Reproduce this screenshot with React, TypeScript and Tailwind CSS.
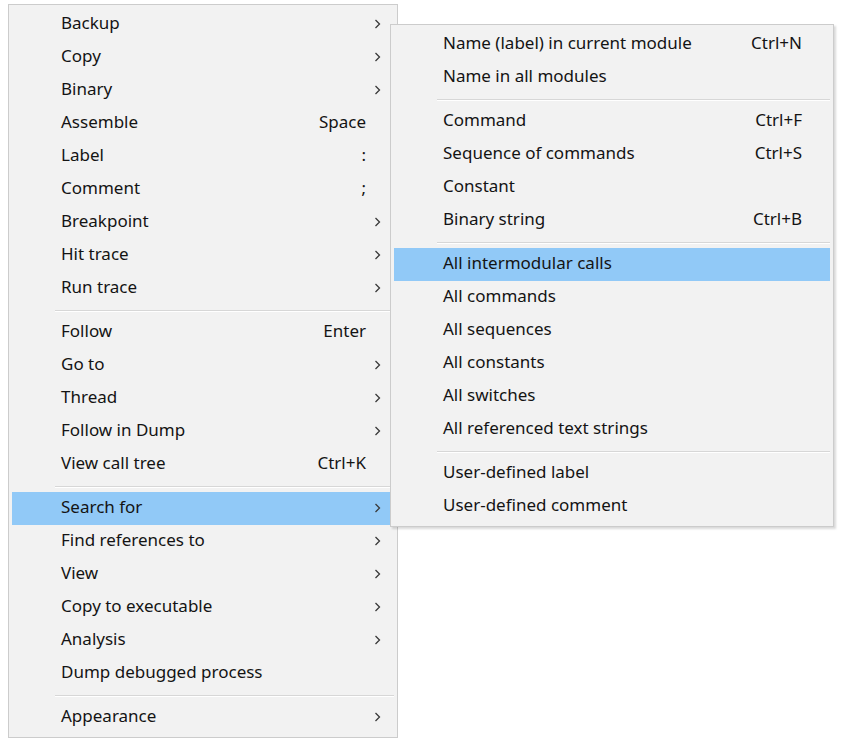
type Item = { label: string; shortcut?: string; sub?: boolean; active?: boolean } | 'sep';

const mainItems: Item[] = [
  { label: 'Backup', sub: true },
  { label: 'Copy', sub: true },
  { label: 'Binary', sub: true },
  { label: 'Assemble', shortcut: 'Space' },
  { label: 'Label', shortcut: ':' },
  { label: 'Comment', shortcut: ';' },
  { label: 'Breakpoint', sub: true },
  { label: 'Hit trace', sub: true },
  { label: 'Run trace', sub: true },
  'sep',
  { label: 'Follow', shortcut: 'Enter' },
  { label: 'Go to', sub: true },
  { label: 'Thread', sub: true },
  { label: 'Follow in Dump', sub: true },
  { label: 'View call tree', shortcut: 'Ctrl+K' },
  'sep',
  { label: 'Search for', sub: true, active: true },
  { label: 'Find references to', sub: true },
  { label: 'View', sub: true },
  { label: 'Copy to executable', sub: true },
  { label: 'Analysis', sub: true },
  { label: 'Dump debugged process' },
  'sep',
  { label: 'Appearance', sub: true },
];

const searchItems: Item[] = [
  { label: 'Name (label) in current module', shortcut: 'Ctrl+N' },
  { label: 'Name in all modules' },
  'sep',
  { label: 'Command', shortcut: 'Ctrl+F' },
  { label: 'Sequence of commands', shortcut: 'Ctrl+S' },
  { label: 'Constant' },
  { label: 'Binary string', shortcut: 'Ctrl+B' },
  'sep',
  { label: 'All intermodular calls', active: true },
  { label: 'All commands' },
  { label: 'All sequences' },
  { label: 'All constants' },
  { label: 'All switches' },
  { label: 'All referenced text strings' },
  'sep',
  { label: 'User-defined label' },
  { label: 'User-defined comment' },
];

function Chevron() {
  return (
    <svg width="7" height="10" viewBox="0 0 7 10" className="absolute right-[13px] top-[11px]">
      <polyline points="1.5,1 5.5,5 1.5,9" fill="none" stroke="#3a3a3a" strokeWidth="1.3" />
    </svg>
  );
}

function Menu({ items, className }: { items: Item[]; className: string }) {
  return (
    <div className={`border border-[#cccccc] bg-[#f2f2f2] p-[3px] ${className}`}>
      {items.map((item, i) =>
        item === 'sep' ? (
          <div key={i} className="h-[11px] flex flex-col justify-center pl-[43px]">
            <div className="h-px bg-[#d7d7d7]" />
            <div className="h-px bg-white" />
          </div>
        ) : (
          <div
            key={i}
            className={`relative flex h-[33px] items-center pb-[3px] pl-[49px] pr-[28px] ${
              item.active ? 'bg-[#91c9f7]' : ''
            }`}
          >
            <span className="flex-1 whitespace-nowrap">{item.label}</span>
            {item.shortcut && <span className="whitespace-nowrap">{item.shortcut}</span>}
            {item.sub && <Chevron />}
          </div>
        )
      )}
    </div>
  );
}

export default function App() {
  return (
    <div
      className="relative h-[750px] w-[843px] bg-white text-[17px] text-[#141414]"
      style={{ fontFamily: '"Noto Sans", "Noto Sans CJK KR", sans-serif' }}
    >
      <div className="pl-2 pt-1">
        <Menu items={mainItems} className="w-[390px]" />
      </div>
      <Menu
        items={searchItems}
        className="absolute left-[390px] top-[24px] w-[444px] shadow-[2px_2px_2px_rgba(0,0,0,0.15)]"
      />
    </div>
  );
}
